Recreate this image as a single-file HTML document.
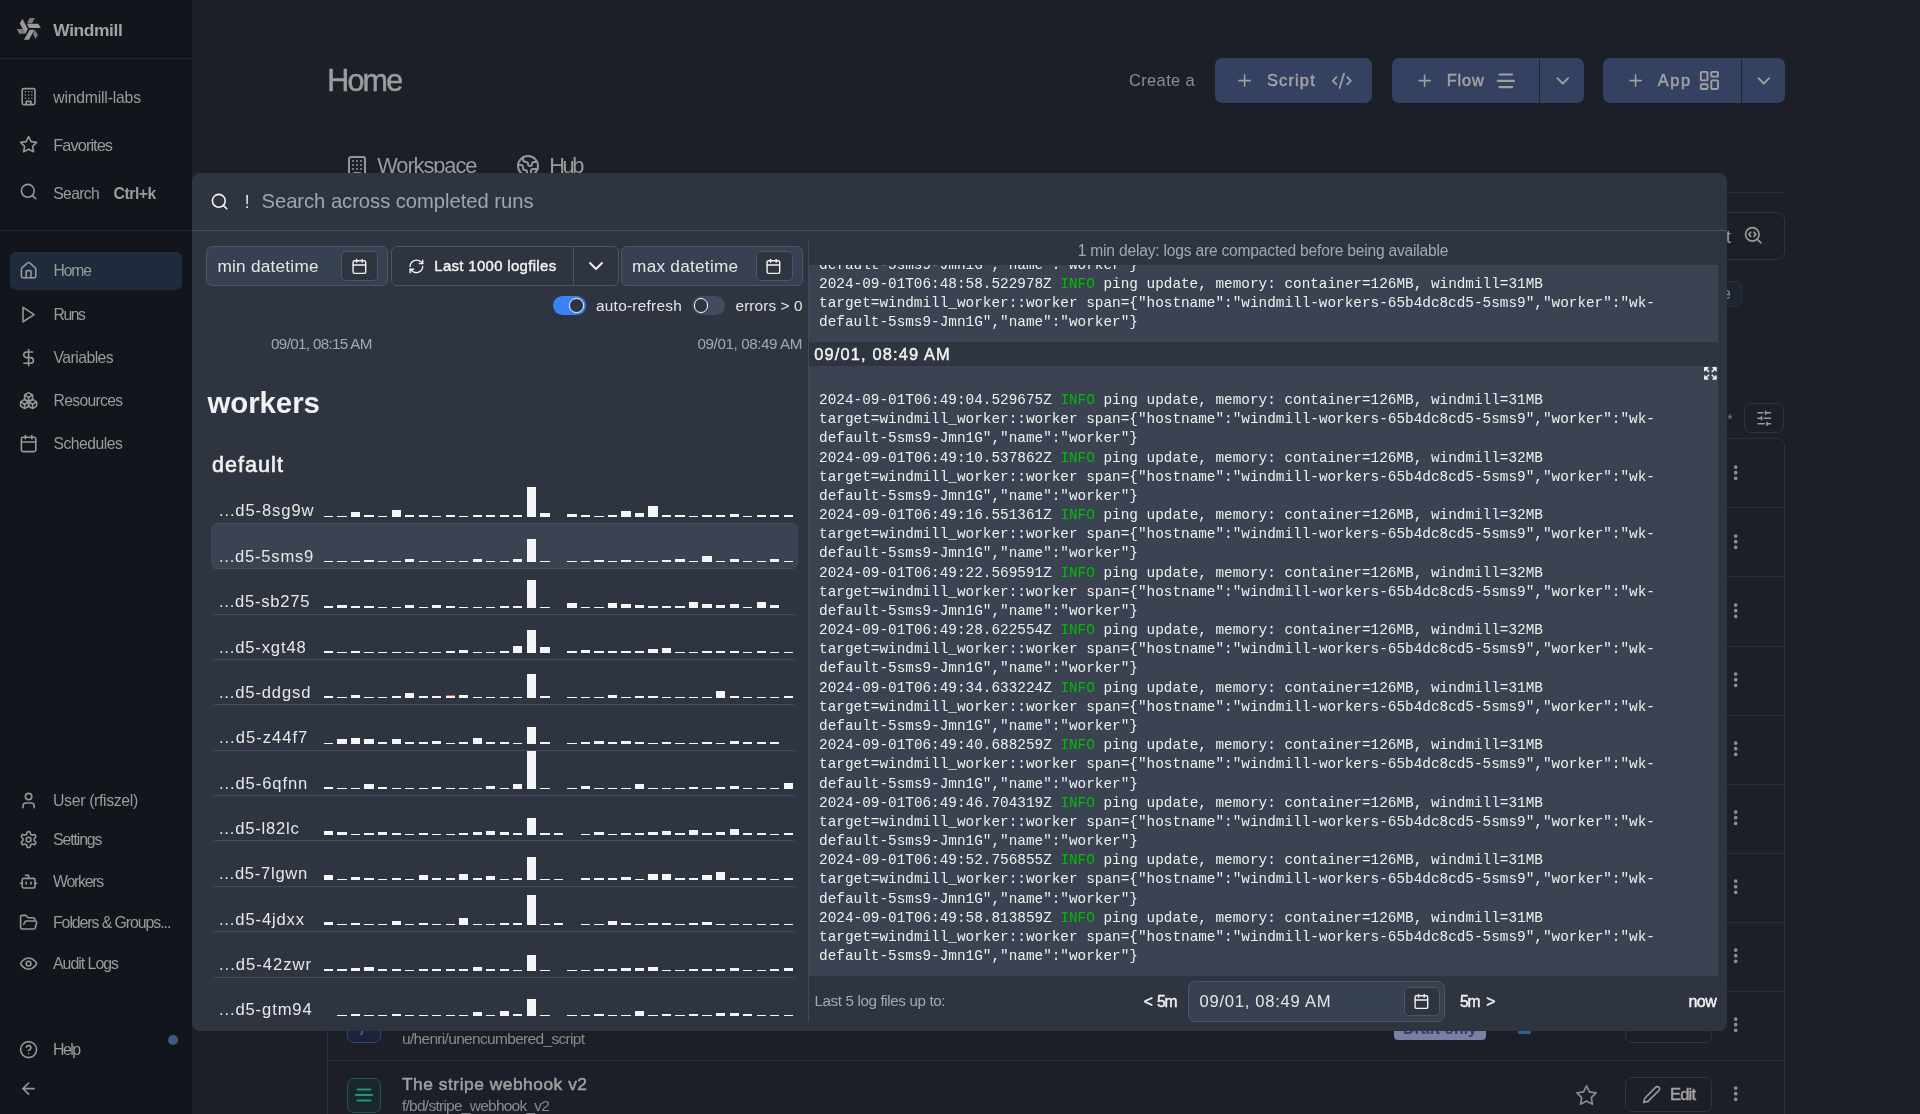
<!DOCTYPE html>
<html><head><meta charset="utf-8"><title>Windmill</title>
<style>
html,body{margin:0;padding:0;width:1920px;height:1114px;overflow:hidden;background:#1c1f27;font-family:'Liberation Sans',sans-serif;}
.r{position:absolute;}
.t{position:absolute;white-space:pre;line-height:1;}
</style></head><body><div id="root" style="position:absolute;left:0;top:0;width:1920px;height:1114px;will-change:transform">
<div class="r" style="left:0px;top:0px;width:192px;height:1114px;background:#12151c;"></div>
<div class="r" style="left:0px;top:58px;width:192px;height:1px;background:#242830;"></div>
<div class="r" style="left:0px;top:230px;width:192px;height:1px;background:#242830;"></div>
<svg class="r" style="left:12px;top:12px" width="34" height="34" viewBox="0 0 1114 1114">
<g fill="#9a9a9a"><polygon points="490,385 860,385 945,525 560,525"/><polygon points="255,380 340,225 520,555 440,720"/><polygon points="390,910 580,580 740,580 555,910"/></g>
<g fill="#7c7c7c"><polygon points="495,365 580,200 750,200 660,365"/><polygon points="160,560 350,560 440,715 230,715"/><polygon points="690,720 750,585 850,750 770,885"/></g></svg>
<div class="t" style="left:53.30px;top:22.21px;font-size:17.4px;color:#a3a3a3;font-weight:700;letter-spacing:-0.400px;">Windmill</div>
<svg class="r" style="left:19.4px;top:87.3px;" width="19.2" height="19.2" viewBox="0 0 24 24" fill="none" stroke="#979797" stroke-width="2" stroke-linecap="round" stroke-linejoin="round"><rect width="16" height="20" x="4" y="2" rx="2" ry="2"/><path d="M9 22v-4h6v4"/><path d="M8 6h.01"/><path d="M16 6h.01"/><path d="M12 6h.01"/><path d="M12 10h.01"/><path d="M12 14h.01"/><path d="M16 10h.01"/><path d="M16 14h.01"/><path d="M8 10h.01"/><path d="M8 14h.01"/></svg>
<div class="t" style="left:53.30px;top:89.66px;font-size:15.7px;color:#9b9b9b;letter-spacing:-0.175px;">windmill-labs</div>
<svg class="r" style="left:18.8px;top:134.6px;" width="19.2" height="19.2" viewBox="0 0 24 24" fill="none" stroke="#979797" stroke-width="2" stroke-linecap="round" stroke-linejoin="round"><polygon points="12 2 15.09 8.26 22 9.27 17 14.14 18.18 21.02 12 17.77 5.82 21.02 7 14.14 2 9.27 8.91 8.26 12 2"/></svg>
<div class="t" style="left:53.30px;top:137.46px;font-size:16.4px;color:#9b9b9b;letter-spacing:-0.963px;">Favorites</div>
<svg class="r" style="left:19.0px;top:182.4px;" width="19.2" height="19.2" viewBox="0 0 24 24" fill="none" stroke="#979797" stroke-width="2" stroke-linecap="round" stroke-linejoin="round"><circle cx="11" cy="11" r="8"/><path d="m21 21-4.3-4.3"/></svg>
<div class="t" style="left:53.30px;top:185.96px;font-size:15.7px;color:#9b9b9b;letter-spacing:-0.644px;">Search</div>
<div class="t" style="left:113.60px;top:185.96px;font-size:15.7px;color:#9b9b9b;font-weight:700;letter-spacing:-0.441px;">Ctrl+k</div>
<div class="r" style="left:10px;top:252px;width:172px;height:37.6px;background:#1f2a3c;border-radius:6px;"></div>
<svg class="r" style="left:19.0px;top:260.59999999999997px;" width="19.2" height="19.2" viewBox="0 0 24 24" fill="none" stroke="#979797" stroke-width="2" stroke-linecap="round" stroke-linejoin="round"><path d="M15 21v-8a1 1 0 0 0-1-1h-4a1 1 0 0 0-1 1v8"/><path d="M3 10a2 2 0 0 1 .709-1.528l7-5.999a2 2 0 0 1 2.582 0l7 5.999A2 2 0 0 1 21 10v9a2 2 0 0 1-2 2H5a2 2 0 0 1-2-2z"/></svg>
<div class="t" style="left:53.50px;top:262.55px;font-size:15.7px;color:#9b9b9b;letter-spacing:-1.120px;">Home</div>
<svg class="r" style="left:19.0px;top:304.7px;" width="19.2" height="19.2" viewBox="0 0 24 24" fill="none" stroke="#979797" stroke-width="2" stroke-linecap="round" stroke-linejoin="round"><polygon points="5 3 19 12 5 21 5 3"/></svg>
<div class="t" style="left:53.50px;top:306.65px;font-size:15.7px;color:#9b9b9b;letter-spacing:-1.442px;">Runs</div>
<svg class="r" style="left:19.0px;top:348.2px;" width="19.2" height="19.2" viewBox="0 0 24 24" fill="none" stroke="#979797" stroke-width="2" stroke-linecap="round" stroke-linejoin="round"><line x1="12" x2="12" y1="2" y2="22"/><path d="M17 5H9.5a3.5 3.5 0 0 0 0 7h5a3.5 3.5 0 0 1 0 7H6"/></svg>
<div class="t" style="left:53.50px;top:350.15px;font-size:15.7px;color:#9b9b9b;letter-spacing:-0.506px;">Variables</div>
<svg class="r" style="left:19.0px;top:391.2px;" width="19.2" height="19.2" viewBox="0 0 24 24" fill="none" stroke="#979797" stroke-width="2" stroke-linecap="round" stroke-linejoin="round"><path d="M2.97 12.92A2 2 0 0 0 2 14.63v3.24a2 2 0 0 0 .97 1.71l3 1.8a2 2 0 0 0 2.06 0L12 19v-5.5l-5-3-4.03 2.42Z"/><path d="m7 16.5-4.74-2.85"/><path d="m7 16.5 5-3"/><path d="M7 16.5v5.17"/><path d="M12 13.5V19l3.97 2.38a2 2 0 0 0 2.06 0l3-1.8a2 2 0 0 0 .97-1.71v-3.24a2 2 0 0 0-.97-1.71L17 10.5l-5 3Z"/><path d="m17 16.5-5-3"/><path d="m17 16.5 4.74-2.85"/><path d="M17 16.5v5.17"/><path d="M7.97 4.42A2 2 0 0 0 7 6.13v4.37l5 3 5-3V6.13a2 2 0 0 0-.97-1.71l-3-1.8a2 2 0 0 0-2.06 0l-3 1.8Z"/><path d="M12 8 7.26 5.15"/><path d="m12 8 4.74-2.85"/><path d="M12 13.5V8"/></svg>
<div class="t" style="left:53.50px;top:393.15px;font-size:15.7px;color:#9b9b9b;letter-spacing:-0.661px;">Resources</div>
<svg class="r" style="left:19.0px;top:433.9px;" width="19.2" height="19.2" viewBox="0 0 24 24" fill="none" stroke="#979797" stroke-width="2" stroke-linecap="round" stroke-linejoin="round"><rect width="18" height="18" x="3" y="4" rx="2" ry="2"/><line x1="16" x2="16" y1="2" y2="6"/><line x1="8" x2="8" y1="2" y2="6"/><line x1="3" x2="21" y1="10" y2="10"/></svg>
<div class="t" style="left:53.50px;top:435.86px;font-size:15.7px;color:#9b9b9b;letter-spacing:-0.496px;">Schedules</div>
<svg class="r" style="left:19.0px;top:790.7px;" width="19.2" height="19.2" viewBox="0 0 24 24" fill="none" stroke="#979797" stroke-width="2" stroke-linecap="round" stroke-linejoin="round"><path d="M19 21v-2a4 4 0 0 0-4-4H9a4 4 0 0 0-4 4v2"/><circle cx="12" cy="7" r="4"/></svg>
<div class="t" style="left:53.00px;top:792.69px;font-size:15.9px;color:#9b9b9b;letter-spacing:-0.365px;">User (rfiszel)</div>
<svg class="r" style="left:19.0px;top:830.2px;" width="19.2" height="19.2" viewBox="0 0 24 24" fill="none" stroke="#979797" stroke-width="2" stroke-linecap="round" stroke-linejoin="round"><path d="M12.22 2h-.44a2 2 0 0 0-2 2v.18a2 2 0 0 1-1 1.73l-.43.25a2 2 0 0 1-2 0l-.15-.08a2 2 0 0 0-2.73.73l-.22.38a2 2 0 0 0 .73 2.73l.15.1a2 2 0 0 1 1 1.72v.51a2 2 0 0 1-1 1.74l-.15.09a2 2 0 0 0-.73 2.73l.22.38a2 2 0 0 0 2.73.73l.15-.08a2 2 0 0 1 2 0l.43.25a2 2 0 0 1 1 1.73V20a2 2 0 0 0 2 2h.44a2 2 0 0 0 2-2v-.18a2 2 0 0 1 1-1.73l.43-.25a2 2 0 0 1 2 0l.15.08a2 2 0 0 0 2.73-.73l.22-.39a2 2 0 0 0-.73-2.73l-.15-.08a2 2 0 0 1-1-1.74v-.5a2 2 0 0 1 1-1.74l.15-.09a2 2 0 0 0 .73-2.73l-.22-.38a2 2 0 0 0-2.73-.73l-.15.08a2 2 0 0 1-2 0l-.43-.25a2 2 0 0 1-1-1.73V4a2 2 0 0 0-2-2z"/><circle cx="12" cy="12" r="3"/></svg>
<div class="t" style="left:53.00px;top:832.19px;font-size:15.9px;color:#9b9b9b;letter-spacing:-1.132px;">Settings</div>
<svg class="r" style="left:19.0px;top:871.6px;" width="19.2" height="19.2" viewBox="0 0 24 24" fill="none" stroke="#979797" stroke-width="2" stroke-linecap="round" stroke-linejoin="round"><path d="M12 8V4H8"/><rect width="16" height="12" x="4" y="8" rx="2"/><path d="M2 14h2"/><path d="M20 14h2"/><path d="M15 13v2"/><path d="M9 13v2"/></svg>
<div class="t" style="left:53.00px;top:873.59px;font-size:15.9px;color:#9b9b9b;letter-spacing:-1.263px;">Workers</div>
<svg class="r" style="left:19.0px;top:912.7px;" width="19.2" height="19.2" viewBox="0 0 24 24" fill="none" stroke="#979797" stroke-width="2" stroke-linecap="round" stroke-linejoin="round"><path d="m6 14 1.5-2.9A2 2 0 0 1 9.24 10H20a2 2 0 0 1 1.94 2.5l-1.54 6a2 2 0 0 1-1.95 1.5H4a2 2 0 0 1-2-2V5a2 2 0 0 1 2-2h3.9a2 2 0 0 1 1.69.9l.81 1.2a2 2 0 0 0 1.67.9H18a2 2 0 0 1 2 2v2"/></svg>
<div class="t" style="left:53.00px;top:914.69px;font-size:15.9px;color:#9b9b9b;letter-spacing:-1.082px;">Folders &amp; Groups...</div>
<svg class="r" style="left:19.0px;top:953.7px;" width="19.2" height="19.2" viewBox="0 0 24 24" fill="none" stroke="#979797" stroke-width="2" stroke-linecap="round" stroke-linejoin="round"><path d="M2 12s3-7 10-7 10 7 10 7-3 7-10 7-10-7-10-7Z"/><circle cx="12" cy="12" r="3"/></svg>
<div class="t" style="left:53.00px;top:955.69px;font-size:15.9px;color:#9b9b9b;letter-spacing:-1.010px;">Audit Logs</div>
<svg class="r" style="left:19.0px;top:1039.8px;" width="19.2" height="19.2" viewBox="0 0 24 24" fill="none" stroke="#979797" stroke-width="2" stroke-linecap="round" stroke-linejoin="round"><circle cx="12" cy="12" r="10"/><path d="M9.09 9a3 3 0 0 1 5.83 1c0 2-3 3-3 3"/><path d="M12 17h.01"/></svg>
<div class="t" style="left:53.00px;top:1042.08px;font-size:15.9px;color:#9b9b9b;letter-spacing:-1.496px;">Help</div>
<div class="r" style="left:168.2px;top:1035.4px;width:10px;height:10px;background:#3d5a80;border-radius:5px;"></div>
<svg class="r" style="left:18.6px;top:1079px;" width="19.2" height="19.2" viewBox="0 0 24 24" fill="none" stroke="#979797" stroke-width="2" stroke-linecap="round" stroke-linejoin="round"><path d="m12 19-7-7 7-7"/><path d="M19 12H5"/></svg>
<div class="t" style="left:327.20px;top:64.98px;font-size:30.5px;color:#9c9c9c;letter-spacing:-1.786px;-webkit-text-stroke:0.5px #9c9c9c;">Home</div>
<div class="t" style="left:1129.00px;top:71.76px;font-size:16.4px;color:#8d8d8d;letter-spacing:0.404px;">Create a</div>
<div class="r" style="left:1215px;top:58px;width:157px;height:45px;background:#344160;border-radius:7px;"></div>
<svg class="r" style="left:1234.8px;top:70.8px;" width="19.2" height="19.2" viewBox="0 0 24 24" fill="none" stroke="#a0a0a0" stroke-width="2" stroke-linecap="round" stroke-linejoin="round"><path d="M5 12h14"/><path d="M12 5v14"/></svg>
<div class="t" style="left:1267.00px;top:72.26px;font-size:16.4px;color:#a3a3a3;-webkit-text-stroke:0.46px #a3a3a3;letter-spacing:1.159px;">Script</div>
<svg class="r" style="left:1331.0px;top:69.8px;" width="21.6" height="21.6" viewBox="0 0 24 24" fill="none" stroke="#a0a0a0" stroke-width="2" stroke-linecap="round" stroke-linejoin="round"><path d="m18 16 4-4-4-4"/><path d="m6 8-4 4 4 4"/><path d="m14.5 4-5 16"/></svg>
<div class="r" style="left:1392px;top:58px;width:192px;height:45px;background:#344160;border-radius:7px;"></div>
<div class="r" style="left:1539px;top:58px;width:1.2px;height:45px;background:#1f2533;"></div>
<svg class="r" style="left:1414.8px;top:70.8px;" width="19.2" height="19.2" viewBox="0 0 24 24" fill="none" stroke="#a0a0a0" stroke-width="2" stroke-linecap="round" stroke-linejoin="round"><path d="M5 12h14"/><path d="M12 5v14"/></svg>
<div class="t" style="left:1446.70px;top:72.26px;font-size:16.4px;color:#a3a3a3;-webkit-text-stroke:0.46px #a3a3a3;letter-spacing:0.864px;">Flow</div>
<svg class="r" style="left:1494.6px;top:70.2px;" width="21.6" height="21.6" viewBox="0 0 24 24" fill="none" stroke="#a0a0a0" stroke-width="2.4" stroke-linecap="round" stroke-linejoin="round"><path d="M5 5h14"/><path d="M3 12h18"/><path d="M5 19h14"/></svg>
<svg class="r" style="left:1552.0px;top:70.4px;" width="21.6" height="21.6" viewBox="0 0 24 24" fill="none" stroke="#a0a0a0" stroke-width="2" stroke-linecap="round" stroke-linejoin="round"><path d="m6 9 6 6 6-6"/></svg>
<div class="r" style="left:1603px;top:58px;width:182px;height:45px;background:#344160;border-radius:7px;"></div>
<div class="r" style="left:1740.5px;top:58px;width:1.2px;height:45px;background:#1f2533;"></div>
<svg class="r" style="left:1626.2px;top:70.8px;" width="19.2" height="19.2" viewBox="0 0 24 24" fill="none" stroke="#a0a0a0" stroke-width="2" stroke-linecap="round" stroke-linejoin="round"><path d="M5 12h14"/><path d="M12 5v14"/></svg>
<div class="t" style="left:1657.80px;top:72.26px;font-size:16.4px;color:#a3a3a3;-webkit-text-stroke:0.46px #a3a3a3;letter-spacing:1.614px;">App</div>
<svg class="r" style="left:1697.6px;top:69.4px;" width="22.8" height="22.8" viewBox="0 0 24 24" fill="none" stroke="#a0a0a0" stroke-width="2" stroke-linecap="round" stroke-linejoin="round"><rect width="7" height="9" x="3" y="3" rx="1"/><rect width="7" height="5" x="14" y="3" rx="1"/><rect width="7" height="9" x="14" y="12" rx="1"/><rect width="7" height="5" x="3" y="16" rx="1"/></svg>
<svg class="r" style="left:1753.0px;top:70.4px;" width="21.6" height="21.6" viewBox="0 0 24 24" fill="none" stroke="#a0a0a0" stroke-width="2" stroke-linecap="round" stroke-linejoin="round"><path d="m6 9 6 6 6-6"/></svg>
<svg class="r" style="left:345.0px;top:154.5px;" width="24" height="24" viewBox="0 0 24 24" fill="none" stroke="#959595" stroke-width="2" stroke-linecap="round" stroke-linejoin="round"><rect width="16" height="20" x="4" y="2" rx="2" ry="2"/><path d="M9 22v-4h6v4"/><path d="M8 6h.01"/><path d="M16 6h.01"/><path d="M12 6h.01"/><path d="M12 10h.01"/><path d="M12 14h.01"/><path d="M16 10h.01"/><path d="M16 14h.01"/><path d="M8 10h.01"/><path d="M8 14h.01"/></svg>
<div class="t" style="left:377.20px;top:155.07px;font-size:21.8px;color:#9a9a9a;letter-spacing:-1.053px;">Workspace</div>
<svg class="r" style="left:515.8px;top:153.6px;" width="24" height="24" viewBox="0 0 24 24" fill="none" stroke="#959595" stroke-width="2" stroke-linecap="round" stroke-linejoin="round"><path d="M21.54 15H17a2 2 0 0 0-2 2v4.54"/><path d="M7 3.34V5a3 3 0 0 0 3 3a2 2 0 0 1 2 2c0 1.1.9 2 2 2a2 2 0 0 0 2-2c0-1.1.9-2 2-2h3.17"/><path d="M11 21.95V18a2 2 0 0 0-2-2a2 2 0 0 1-2-2v-1a2 2 0 0 0-2-2H2.05"/><circle cx="12" cy="12" r="10"/></svg>
<div class="t" style="left:549.20px;top:155.07px;font-size:21.8px;color:#9a9a9a;letter-spacing:-2.400px;">Hub</div>
<div class="r" style="left:327px;top:192px;width:1458px;height:1px;background:#2a2f39;"></div>
<div class="r" style="left:1500px;top:212.3px;width:285px;height:48.2px;border:1px solid #2d333e;box-sizing:border-box;border-radius:8px;"></div>
<div class="t" style="left:1731.00px;top:227.18px;font-size:19.2px;color:#9a9a9a;transform:translateX(-100%);">t</div>
<svg class="r" style="left:1742.8px;top:225.4px;" width="20.4" height="20.4" viewBox="0 0 24 24" fill="none" stroke="#9a9a9a" stroke-width="2" stroke-linecap="round" stroke-linejoin="round"><path d="m13 13.5 2-2.5-2-2.5"/><path d="m21 21-4.3-4.3"/><path d="M9 8.5 7 11l2 2.5"/><circle cx="11" cy="11" r="8"/></svg>
<div class="r" style="left:1600px;top:281px;width:142px;height:26px;background:#1e2531;border:1px solid #2a313d;box-sizing:border-box;border-radius:6px;"></div>
<div class="t" style="left:1731.00px;top:285.90px;font-size:16px;color:#8a8f98;transform:translateX(-100%);">e</div>
<div class="t" style="left:1727.20px;top:412.10px;font-size:14px;color:#7e7e7e;">*</div>
<div class="r" style="left:1744.4px;top:403.4px;width:40px;height:30px;border:1px solid #2d333e;box-sizing:border-box;border-radius:7px;"></div>
<svg class="r" style="left:1756.3px;top:410.2px;" width="16.6" height="16.6" viewBox="0 0 24 24" fill="none" stroke="#9a9a9a" stroke-width="2.3" stroke-linecap="round" stroke-linejoin="round"><line x1="21" x2="14" y1="4" y2="4"/><line x1="10" x2="3" y1="4" y2="4"/><line x1="21" x2="12" y1="12" y2="12"/><line x1="8" x2="3" y1="12" y2="12"/><line x1="21" x2="16" y1="20" y2="20"/><line x1="12" x2="3" y1="20" y2="20"/><line x1="14" x2="14" y1="2" y2="6"/><line x1="8" x2="8" y1="10" y2="14"/><line x1="16" x2="16" y1="18" y2="22"/></svg>
<div class="r" style="left:327px;top:437.6px;width:1458px;height:700px;border:1px solid #2a2f3a;box-sizing:border-box;border-radius:8px;"></div>
<div class="r" style="left:327px;top:507.4px;width:1458px;height:1px;background:#2a2f3a;"></div>
<div class="r" style="left:327px;top:576.48px;width:1458px;height:1px;background:#2a2f3a;"></div>
<div class="r" style="left:327px;top:645.56px;width:1458px;height:1px;background:#2a2f3a;"></div>
<div class="r" style="left:327px;top:714.64px;width:1458px;height:1px;background:#2a2f3a;"></div>
<div class="r" style="left:327px;top:783.72px;width:1458px;height:1px;background:#2a2f3a;"></div>
<div class="r" style="left:327px;top:852.8px;width:1458px;height:1px;background:#2a2f3a;"></div>
<div class="r" style="left:327px;top:921.88px;width:1458px;height:1px;background:#2a2f3a;"></div>
<div class="r" style="left:327px;top:990.96px;width:1458px;height:1px;background:#2a2f3a;"></div>
<div class="r" style="left:327px;top:1060.04px;width:1458px;height:1px;background:#2a2f3a;"></div>
<svg class="r" style="left:1725.9px;top:462.7px;" width="19.4" height="19.4" viewBox="0 0 24 24" fill="none" stroke="#8f8f8f" stroke-width="2.6" stroke-linecap="round" stroke-linejoin="round"><g fill="#8f8f8f"><circle cx="12" cy="12" r="1"/><circle cx="12" cy="5" r="1"/><circle cx="12" cy="19" r="1"/></g></svg>
<svg class="r" style="left:1725.9px;top:531.78px;" width="19.4" height="19.4" viewBox="0 0 24 24" fill="none" stroke="#8f8f8f" stroke-width="2.6" stroke-linecap="round" stroke-linejoin="round"><g fill="#8f8f8f"><circle cx="12" cy="12" r="1"/><circle cx="12" cy="5" r="1"/><circle cx="12" cy="19" r="1"/></g></svg>
<svg class="r" style="left:1725.9px;top:600.86px;" width="19.4" height="19.4" viewBox="0 0 24 24" fill="none" stroke="#8f8f8f" stroke-width="2.6" stroke-linecap="round" stroke-linejoin="round"><g fill="#8f8f8f"><circle cx="12" cy="12" r="1"/><circle cx="12" cy="5" r="1"/><circle cx="12" cy="19" r="1"/></g></svg>
<svg class="r" style="left:1725.9px;top:669.94px;" width="19.4" height="19.4" viewBox="0 0 24 24" fill="none" stroke="#8f8f8f" stroke-width="2.6" stroke-linecap="round" stroke-linejoin="round"><g fill="#8f8f8f"><circle cx="12" cy="12" r="1"/><circle cx="12" cy="5" r="1"/><circle cx="12" cy="19" r="1"/></g></svg>
<svg class="r" style="left:1725.9px;top:739.02px;" width="19.4" height="19.4" viewBox="0 0 24 24" fill="none" stroke="#8f8f8f" stroke-width="2.6" stroke-linecap="round" stroke-linejoin="round"><g fill="#8f8f8f"><circle cx="12" cy="12" r="1"/><circle cx="12" cy="5" r="1"/><circle cx="12" cy="19" r="1"/></g></svg>
<svg class="r" style="left:1725.9px;top:808.0999999999999px;" width="19.4" height="19.4" viewBox="0 0 24 24" fill="none" stroke="#8f8f8f" stroke-width="2.6" stroke-linecap="round" stroke-linejoin="round"><g fill="#8f8f8f"><circle cx="12" cy="12" r="1"/><circle cx="12" cy="5" r="1"/><circle cx="12" cy="19" r="1"/></g></svg>
<svg class="r" style="left:1725.9px;top:877.1800000000001px;" width="19.4" height="19.4" viewBox="0 0 24 24" fill="none" stroke="#8f8f8f" stroke-width="2.6" stroke-linecap="round" stroke-linejoin="round"><g fill="#8f8f8f"><circle cx="12" cy="12" r="1"/><circle cx="12" cy="5" r="1"/><circle cx="12" cy="19" r="1"/></g></svg>
<svg class="r" style="left:1725.9px;top:946.26px;" width="19.4" height="19.4" viewBox="0 0 24 24" fill="none" stroke="#8f8f8f" stroke-width="2.6" stroke-linecap="round" stroke-linejoin="round"><g fill="#8f8f8f"><circle cx="12" cy="12" r="1"/><circle cx="12" cy="5" r="1"/><circle cx="12" cy="19" r="1"/></g></svg>
<svg class="r" style="left:1725.9px;top:1015.3399999999999px;" width="19.4" height="19.4" viewBox="0 0 24 24" fill="none" stroke="#8f8f8f" stroke-width="2.6" stroke-linecap="round" stroke-linejoin="round"><g fill="#8f8f8f"><circle cx="12" cy="12" r="1"/><circle cx="12" cy="5" r="1"/><circle cx="12" cy="19" r="1"/></g></svg>
<svg class="r" style="left:1725.9px;top:1084.42px;" width="19.4" height="19.4" viewBox="0 0 24 24" fill="none" stroke="#8f8f8f" stroke-width="2.6" stroke-linecap="round" stroke-linejoin="round"><g fill="#8f8f8f"><circle cx="12" cy="12" r="1"/><circle cx="12" cy="5" r="1"/><circle cx="12" cy="19" r="1"/></g></svg>
<div class="r" style="left:347px;top:1008.5px;width:34px;height:34px;background:#1b2338;border:1.3px solid #2f4a78;box-sizing:border-box;border-radius:7px;"></div>
<div class="r" style="left:360.5px;top:1029px;width:2.2px;height:6px;background:#3563b0;transform:skewX(-18deg);"></div>
<div class="t" style="left:402.00px;top:1031.33px;font-size:15.5px;color:#8a8a8a;letter-spacing:-0.683px;">u/henri/unencumbered_script</div>
<div class="r" style="left:1394px;top:1012px;width:92px;height:28px;background:#7b7fa3;border-radius:4px;"></div>
<div class="t" style="left:1403.00px;top:1021.40px;font-size:16px;color:#3a3a6e;font-weight:700;letter-spacing:-0.075px;">Draft only</div>
<div class="r" style="left:1518px;top:1029px;width:13px;height:5px;background:#2f5d94;border-radius:1px;"></div>
<div class="r" style="left:1625.4px;top:1008px;width:86.2px;height:35.3px;border:1px solid #30353f;box-sizing:border-box;border-radius:7px;"></div>
<div class="r" style="left:347px;top:1077.5px;width:34px;height:35px;background:#1a2629;border:1.3px solid #1d5c4a;box-sizing:border-box;border-radius:7px;"></div>
<svg class="r" style="left:353px;top:1084px" width="22" height="22" viewBox="0 0 24 24" fill="none" stroke="#1f9481" stroke-width="2.3" stroke-linecap="round"><path d="M5 6h14"/><path d="M3 12h18"/><path d="M5 18h14"/></svg>
<div class="t" style="left:402.00px;top:1075.81px;font-size:17.4px;color:#a0a0a0;-webkit-text-stroke:0.49px #a0a0a0;letter-spacing:0.502px;">The stripe webhook v2</div>
<div class="t" style="left:402.00px;top:1097.73px;font-size:15.5px;color:#8a8a8a;letter-spacing:-0.749px;">f/bd/stripe_webhook_v2</div>
<svg class="r" style="left:1574.6px;top:1083.5px;" width="23" height="23" viewBox="0 0 24 24" fill="none" stroke="#8a8a8a" stroke-width="1.8" stroke-linecap="round" stroke-linejoin="round"><polygon points="12 2 15.09 8.26 22 9.27 17 14.14 18.18 21.02 12 17.77 5.82 21.02 7 14.14 2 9.27 8.91 8.26 12 2"/></svg>
<div class="r" style="left:1625.4px;top:1077px;width:86.2px;height:35.3px;border:1px solid #30353f;box-sizing:border-box;border-radius:7px;"></div>
<svg class="r" style="left:1641.5px;top:1085.4px;" width="19.2" height="19.2" viewBox="0 0 24 24" fill="none" stroke="#9a9a9a" stroke-width="2" stroke-linecap="round" stroke-linejoin="round"><path d="M17 3a2.85 2.83 0 1 1 4 4L7.5 20.5 2 22l1.5-5.5Z"/></svg>
<div class="t" style="left:1670.00px;top:1086.69px;font-size:16.6px;color:#a3a3a3;-webkit-text-stroke:0.46px #a3a3a3;letter-spacing:-0.865px;">Edit</div>
<div class="r" style="left:192px;top:173px;width:1535px;height:858px;background:#2e3440;border-radius:8px;"></div>
<div class="r" style="left:192px;top:230px;width:1535px;height:1px;background:#46505f;"></div>
<svg class="r" style="left:209.6px;top:191.8px;" width="19.2" height="19.2" viewBox="0 0 24 24" fill="none" stroke="#f2f2f2" stroke-width="2" stroke-linecap="round" stroke-linejoin="round"><circle cx="11" cy="11" r="8"/><path d="m21 21-4.3-4.3"/></svg>
<div class="t" style="left:244.50px;top:191.88px;font-size:19.2px;color:#dddddd;letter-spacing:-1.844px;">!</div>
<div class="t" style="left:261.50px;top:191.43px;font-size:20.2px;color:#a0a6b1;letter-spacing:-0.025px;">Search across completed runs</div>
<div class="r" style="left:206px;top:246px;width:181.5px;height:39.7px;background:#374151;border:1px solid #4b5563;box-sizing:border-box;border-radius:6px;"></div>
<div class="r" style="left:341.4px;top:251.2px;width:37px;height:29.4px;background:#2e3440;border:1px solid #4b5563;box-sizing:border-box;border-radius:5px;"></div>
<svg class="r" style="left:350.9px;top:257.9px;" width="16.8" height="16.8" viewBox="0 0 24 24" fill="none" stroke="#f2f2f2" stroke-width="2" stroke-linecap="round" stroke-linejoin="round"><rect width="18" height="18" x="3" y="4" rx="2" ry="2"/><line x1="16" x2="16" y1="2" y2="6"/><line x1="8" x2="8" y1="2" y2="6"/><line x1="3" x2="21" y1="10" y2="10"/></svg>
<div class="t" style="left:217.50px;top:257.68px;font-size:17.2px;color:#e6e6e6;letter-spacing:0.236px;">min datetime</div>
<div class="r" style="left:391px;top:246px;width:227.7px;height:39.7px;border:1px solid #4b5563;box-sizing:border-box;border-radius:6px;"></div>
<div class="r" style="left:573px;top:246px;width:1px;height:39.7px;background:#4b5563;"></div>
<svg class="r" style="left:407.6px;top:257.6px;" width="16.8" height="16.8" viewBox="0 0 24 24" fill="none" stroke="#f2f2f2" stroke-width="2" stroke-linecap="round" stroke-linejoin="round"><path d="M3 12a9 9 0 0 1 9-9 9.75 9.75 0 0 1 6.74 2.74L21 8"/><path d="M21 3v5h-5"/><path d="M21 12a9 9 0 0 1-9 9 9.75 9.75 0 0 1-6.74-2.74L3 16"/><path d="M8 16H3v5"/></svg>
<div class="t" style="left:434.30px;top:259.33px;font-size:14.9px;color:#f2f2f2;-webkit-text-stroke:0.42px #f2f2f2;letter-spacing:0.347px;">Last 1000 logfiles</div>
<svg class="r" style="left:583.8px;top:253.8px;" width="24" height="24" viewBox="0 0 24 24" fill="none" stroke="#f2f2f2" stroke-width="2" stroke-linecap="round" stroke-linejoin="round"><path d="m6 9 6 6 6-6"/></svg>
<div class="r" style="left:621px;top:246px;width:182px;height:39.7px;background:#374151;border:1px solid #4b5563;box-sizing:border-box;border-radius:6px;"></div>
<div class="r" style="left:755.7px;top:251.2px;width:37px;height:29.4px;background:#2e3440;border:1px solid #4b5563;box-sizing:border-box;border-radius:5px;"></div>
<svg class="r" style="left:765.2px;top:257.9px;" width="16.8" height="16.8" viewBox="0 0 24 24" fill="none" stroke="#f2f2f2" stroke-width="2" stroke-linecap="round" stroke-linejoin="round"><rect width="18" height="18" x="3" y="4" rx="2" ry="2"/><line x1="16" x2="16" y1="2" y2="6"/><line x1="8" x2="8" y1="2" y2="6"/><line x1="3" x2="21" y1="10" y2="10"/></svg>
<div class="t" style="left:632.10px;top:257.68px;font-size:17.2px;color:#e6e6e6;letter-spacing:0.257px;">max datetime</div>
<div class="r" style="left:553px;top:296px;width:33px;height:18.8px;background:#3b82f6;border-radius:9.4px;"></div>
<div class="r" style="left:569.2px;top:298.3px;width:14.6px;height:14.6px;background:#2e3440;border:1.5px solid #ffffff;box-sizing:border-box;border-radius:7.3px;"></div>
<div class="t" style="left:596.00px;top:297.51px;font-size:15.4px;color:#e6e6e6;letter-spacing:0.247px;">auto-refresh</div>
<div class="r" style="left:692px;top:296px;width:33px;height:18.8px;background:#434c5e;border-radius:9.4px;"></div>
<div class="r" style="left:693.9px;top:298.3px;width:14.6px;height:14.6px;background:#2e3440;border:1.5px solid #ffffff;box-sizing:border-box;border-radius:7.3px;"></div>
<div class="t" style="left:735.50px;top:297.51px;font-size:15.4px;color:#e6e6e6;letter-spacing:0.078px;">errors &gt; 0</div>
<div class="t" style="left:271.10px;top:335.98px;font-size:15.2px;color:#a3a9b4;letter-spacing:-0.666px;">09/01, 08:15 AM</div>
<div class="t" style="left:697.50px;top:335.98px;font-size:15.2px;color:#a3a9b4;letter-spacing:-0.402px;">09/01, 08:49 AM</div>
<div class="t" style="left:207.40px;top:387.91px;font-size:29.4px;color:#f2f2f2;font-weight:700;letter-spacing:-0.039px;">workers</div>
<div class="t" style="left:211.90px;top:453.84px;font-size:21.6px;color:#f2f2f2;-webkit-text-stroke:0.60px #f2f2f2;letter-spacing:1.026px;">default</div>
<div class="t" style="left:218.90px;top:503.49px;font-size:16.6px;color:#e8e8e8;letter-spacing:0.882px;">...d5-8sg9w</div>
<div class="r" style="left:211.0px;top:522.9px;width:586.8px;height:45.4px;background:#3b4252;border-top:1px solid #444e60;border-radius:6px;"></div>
<div class="t" style="left:218.90px;top:548.85px;font-size:16.6px;color:#e8e8e8;letter-spacing:0.770px;">...d5-5sms9</div>
<div class="r" style="left:211.0px;top:568.26px;width:586.8px;height:45.4px;background:transparent;border-top:1px solid #444e60;border-radius:6px;"></div>
<div class="t" style="left:218.90px;top:594.21px;font-size:16.6px;color:#e8e8e8;letter-spacing:0.757px;">...d5-sb275</div>
<div class="r" style="left:211.0px;top:613.62px;width:586.8px;height:45.4px;background:transparent;border-top:1px solid #444e60;border-radius:6px;"></div>
<div class="t" style="left:218.90px;top:639.57px;font-size:16.6px;color:#e8e8e8;letter-spacing:0.838px;">...d5-xgt48</div>
<div class="r" style="left:211.0px;top:658.98px;width:586.8px;height:45.4px;background:transparent;border-top:1px solid #444e60;border-radius:6px;"></div>
<div class="t" style="left:218.90px;top:684.93px;font-size:16.6px;color:#e8e8e8;letter-spacing:0.847px;">...d5-ddgsd</div>
<div class="r" style="left:211.0px;top:704.3399999999999px;width:586.8px;height:45.4px;background:transparent;border-top:1px solid #444e60;border-radius:6px;"></div>
<div class="t" style="left:218.90px;top:730.29px;font-size:16.6px;color:#e8e8e8;letter-spacing:0.998px;">...d5-z44f7</div>
<div class="r" style="left:211.0px;top:749.7px;width:586.8px;height:45.4px;background:transparent;border-top:1px solid #444e60;border-radius:6px;"></div>
<div class="t" style="left:218.90px;top:775.65px;font-size:16.6px;color:#e8e8e8;letter-spacing:0.906px;">...d5-6qfnn</div>
<div class="r" style="left:211.0px;top:795.06px;width:586.8px;height:45.4px;background:transparent;border-top:1px solid #444e60;border-radius:6px;"></div>
<div class="t" style="left:218.90px;top:821.01px;font-size:16.6px;color:#e8e8e8;letter-spacing:0.805px;">...d5-l82lc</div>
<div class="r" style="left:211.0px;top:840.42px;width:586.8px;height:45.4px;background:transparent;border-top:1px solid #444e60;border-radius:6px;"></div>
<div class="t" style="left:218.90px;top:866.37px;font-size:16.6px;color:#e8e8e8;letter-spacing:0.723px;">...d5-7lgwn</div>
<div class="r" style="left:211.0px;top:885.78px;width:586.8px;height:45.4px;background:transparent;border-top:1px solid #444e60;border-radius:6px;"></div>
<div class="t" style="left:218.90px;top:911.73px;font-size:16.6px;color:#e8e8e8;letter-spacing:0.864px;">...d5-4jdxx</div>
<div class="r" style="left:211.0px;top:931.14px;width:586.8px;height:45.4px;background:transparent;border-top:1px solid #444e60;border-radius:6px;"></div>
<div class="t" style="left:218.90px;top:957.09px;font-size:16.6px;color:#e8e8e8;letter-spacing:1.012px;">...d5-42zwr</div>
<div class="r" style="left:211.0px;top:976.5px;width:586.8px;height:45.4px;background:transparent;border-top:1px solid #444e60;border-radius:6px;"></div>
<div class="t" style="left:218.90px;top:1002.45px;font-size:16.6px;color:#e8e8e8;letter-spacing:0.886px;">...d5-gtm94</div>
<svg class="r" style="left:0;top:0" width="1920" height="1114" shape-rendering="crispEdges"><rect x="323.90" y="515.70" width="9.3" height="1.30" fill="#f4f5f7"/><rect x="337.42" y="515.70" width="9.3" height="1.30" fill="#f4f5f7"/><rect x="350.94" y="512.00" width="9.3" height="5.00" fill="#f4f5f7"/><rect x="364.46" y="514.70" width="9.3" height="2.30" fill="#f4f5f7"/><rect x="377.98" y="515.70" width="9.3" height="1.30" fill="#f4f5f7"/><rect x="391.50" y="510.00" width="9.3" height="7.00" fill="#f4f5f7"/><rect x="405.02" y="514.70" width="9.3" height="2.30" fill="#f4f5f7"/><rect x="418.54" y="514.70" width="9.3" height="2.30" fill="#f4f5f7"/><rect x="432.06" y="515.70" width="9.3" height="1.30" fill="#f4f5f7"/><rect x="445.58" y="514.70" width="9.3" height="2.30" fill="#f4f5f7"/><rect x="459.10" y="515.70" width="9.3" height="1.30" fill="#f4f5f7"/><rect x="472.62" y="514.70" width="9.3" height="2.30" fill="#f4f5f7"/><rect x="486.14" y="514.70" width="9.3" height="2.30" fill="#f4f5f7"/><rect x="499.66" y="514.70" width="9.3" height="2.30" fill="#f4f5f7"/><rect x="513.18" y="514.70" width="9.3" height="2.30" fill="#f4f5f7"/><rect x="526.70" y="487.00" width="9.3" height="30.00" fill="#f4f5f7"/><rect x="540.22" y="513.00" width="9.3" height="4.00" fill="#f4f5f7"/><rect x="567.26" y="514.00" width="9.3" height="3.00" fill="#f4f5f7"/><rect x="580.78" y="514.70" width="9.3" height="2.30" fill="#f4f5f7"/><rect x="594.30" y="515.70" width="9.3" height="1.30" fill="#f4f5f7"/><rect x="607.82" y="514.70" width="9.3" height="2.30" fill="#f4f5f7"/><rect x="621.34" y="511.00" width="9.3" height="6.00" fill="#f4f5f7"/><rect x="634.86" y="513.00" width="9.3" height="4.00" fill="#f4f5f7"/><rect x="648.38" y="506.00" width="9.3" height="11.00" fill="#f4f5f7"/><rect x="661.90" y="514.70" width="9.3" height="2.30" fill="#f4f5f7"/><rect x="675.42" y="514.70" width="9.3" height="2.30" fill="#f4f5f7"/><rect x="688.94" y="515.70" width="9.3" height="1.30" fill="#f4f5f7"/><rect x="702.46" y="514.70" width="9.3" height="2.30" fill="#f4f5f7"/><rect x="715.98" y="514.70" width="9.3" height="2.30" fill="#f4f5f7"/><rect x="729.50" y="514.00" width="9.3" height="3.00" fill="#f4f5f7"/><rect x="743.02" y="515.70" width="9.3" height="1.30" fill="#f4f5f7"/><rect x="756.54" y="514.70" width="9.3" height="2.30" fill="#f4f5f7"/><rect x="770.06" y="514.70" width="9.3" height="2.30" fill="#f4f5f7"/><rect x="783.58" y="514.70" width="9.3" height="2.30" fill="#f4f5f7"/><rect x="323.90" y="560.70" width="9.3" height="1.30" fill="#f4f5f7"/><rect x="337.42" y="560.70" width="9.3" height="1.30" fill="#f4f5f7"/><rect x="350.94" y="560.70" width="9.3" height="1.30" fill="#f4f5f7"/><rect x="364.46" y="559.70" width="9.3" height="2.30" fill="#f4f5f7"/><rect x="377.98" y="560.70" width="9.3" height="1.30" fill="#f4f5f7"/><rect x="391.50" y="560.70" width="9.3" height="1.30" fill="#f4f5f7"/><rect x="405.02" y="559.00" width="9.3" height="3.00" fill="#f4f5f7"/><rect x="418.54" y="560.70" width="9.3" height="1.30" fill="#f4f5f7"/><rect x="432.06" y="560.70" width="9.3" height="1.30" fill="#f4f5f7"/><rect x="445.58" y="560.70" width="9.3" height="1.30" fill="#f4f5f7"/><rect x="459.10" y="560.70" width="9.3" height="1.30" fill="#f4f5f7"/><rect x="472.62" y="559.00" width="9.3" height="3.00" fill="#f4f5f7"/><rect x="486.14" y="560.70" width="9.3" height="1.30" fill="#f4f5f7"/><rect x="499.66" y="560.70" width="9.3" height="1.30" fill="#f4f5f7"/><rect x="513.18" y="559.00" width="9.3" height="3.00" fill="#f4f5f7"/><rect x="526.70" y="539.00" width="9.3" height="23.00" fill="#f4f5f7"/><rect x="540.22" y="560.70" width="9.3" height="1.30" fill="#f4f5f7"/><rect x="567.26" y="560.70" width="9.3" height="1.30" fill="#f4f5f7"/><rect x="580.78" y="560.70" width="9.3" height="1.30" fill="#f4f5f7"/><rect x="594.30" y="559.70" width="9.3" height="2.30" fill="#f4f5f7"/><rect x="607.82" y="560.70" width="9.3" height="1.30" fill="#f4f5f7"/><rect x="621.34" y="559.70" width="9.3" height="2.30" fill="#f4f5f7"/><rect x="634.86" y="560.70" width="9.3" height="1.30" fill="#f4f5f7"/><rect x="648.38" y="560.70" width="9.3" height="1.30" fill="#f4f5f7"/><rect x="661.90" y="559.70" width="9.3" height="2.30" fill="#f4f5f7"/><rect x="675.42" y="559.00" width="9.3" height="3.00" fill="#f4f5f7"/><rect x="688.94" y="560.70" width="9.3" height="1.30" fill="#f4f5f7"/><rect x="702.46" y="556.00" width="9.3" height="6.00" fill="#f4f5f7"/><rect x="715.98" y="560.70" width="9.3" height="1.30" fill="#f4f5f7"/><rect x="729.50" y="559.00" width="9.3" height="3.00" fill="#f4f5f7"/><rect x="743.02" y="560.70" width="9.3" height="1.30" fill="#f4f5f7"/><rect x="756.54" y="560.70" width="9.3" height="1.30" fill="#f4f5f7"/><rect x="770.06" y="559.00" width="9.3" height="3.00" fill="#f4f5f7"/><rect x="783.58" y="560.70" width="9.3" height="1.30" fill="#f4f5f7"/><rect x="323.90" y="605.70" width="9.3" height="2.30" fill="#f4f5f7"/><rect x="337.42" y="605.00" width="9.3" height="3.00" fill="#f4f5f7"/><rect x="350.94" y="605.70" width="9.3" height="2.30" fill="#f4f5f7"/><rect x="364.46" y="605.70" width="9.3" height="2.30" fill="#f4f5f7"/><rect x="377.98" y="606.70" width="9.3" height="1.30" fill="#f4f5f7"/><rect x="391.50" y="606.70" width="9.3" height="1.30" fill="#f4f5f7"/><rect x="405.02" y="605.00" width="9.3" height="3.00" fill="#f4f5f7"/><rect x="418.54" y="606.70" width="9.3" height="1.30" fill="#f4f5f7"/><rect x="432.06" y="605.00" width="9.3" height="3.00" fill="#f4f5f7"/><rect x="445.58" y="605.70" width="9.3" height="2.30" fill="#f4f5f7"/><rect x="459.10" y="606.70" width="9.3" height="1.30" fill="#f4f5f7"/><rect x="472.62" y="606.70" width="9.3" height="1.30" fill="#f4f5f7"/><rect x="486.14" y="606.70" width="9.3" height="1.30" fill="#f4f5f7"/><rect x="499.66" y="605.70" width="9.3" height="2.30" fill="#f4f5f7"/><rect x="513.18" y="605.70" width="9.3" height="2.30" fill="#f4f5f7"/><rect x="526.70" y="580.00" width="9.3" height="28.00" fill="#f4f5f7"/><rect x="540.22" y="606.70" width="9.3" height="1.30" fill="#f4f5f7"/><rect x="567.26" y="603.00" width="9.3" height="5.00" fill="#f4f5f7"/><rect x="580.78" y="606.70" width="9.3" height="1.30" fill="#f4f5f7"/><rect x="594.30" y="606.70" width="9.3" height="1.30" fill="#f4f5f7"/><rect x="607.82" y="603.00" width="9.3" height="5.00" fill="#f4f5f7"/><rect x="621.34" y="604.00" width="9.3" height="4.00" fill="#f4f5f7"/><rect x="634.86" y="605.00" width="9.3" height="3.00" fill="#f4f5f7"/><rect x="648.38" y="605.70" width="9.3" height="2.30" fill="#f4f5f7"/><rect x="661.90" y="605.70" width="9.3" height="2.30" fill="#f4f5f7"/><rect x="675.42" y="605.70" width="9.3" height="2.30" fill="#f4f5f7"/><rect x="688.94" y="602.00" width="9.3" height="6.00" fill="#f4f5f7"/><rect x="702.46" y="604.00" width="9.3" height="4.00" fill="#f4f5f7"/><rect x="715.98" y="605.00" width="9.3" height="3.00" fill="#f4f5f7"/><rect x="729.50" y="604.00" width="9.3" height="4.00" fill="#f4f5f7"/><rect x="743.02" y="606.70" width="9.3" height="1.30" fill="#f4f5f7"/><rect x="756.54" y="602.00" width="9.3" height="6.00" fill="#f4f5f7"/><rect x="770.06" y="605.00" width="9.3" height="3.00" fill="#f4f5f7"/><rect x="323.90" y="650.70" width="9.3" height="2.30" fill="#f4f5f7"/><rect x="337.42" y="651.70" width="9.3" height="1.30" fill="#f4f5f7"/><rect x="350.94" y="650.70" width="9.3" height="2.30" fill="#f4f5f7"/><rect x="364.46" y="651.70" width="9.3" height="1.30" fill="#f4f5f7"/><rect x="377.98" y="651.70" width="9.3" height="1.30" fill="#f4f5f7"/><rect x="391.50" y="651.70" width="9.3" height="1.30" fill="#f4f5f7"/><rect x="405.02" y="651.70" width="9.3" height="1.30" fill="#f4f5f7"/><rect x="418.54" y="651.70" width="9.3" height="1.30" fill="#f4f5f7"/><rect x="432.06" y="651.70" width="9.3" height="1.30" fill="#f4f5f7"/><rect x="445.58" y="650.70" width="9.3" height="2.30" fill="#f4f5f7"/><rect x="459.10" y="650.00" width="9.3" height="3.00" fill="#f4f5f7"/><rect x="472.62" y="651.70" width="9.3" height="1.30" fill="#f4f5f7"/><rect x="486.14" y="651.70" width="9.3" height="1.30" fill="#f4f5f7"/><rect x="499.66" y="650.70" width="9.3" height="2.30" fill="#f4f5f7"/><rect x="513.18" y="646.00" width="9.3" height="7.00" fill="#f4f5f7"/><rect x="526.70" y="630.00" width="9.3" height="23.00" fill="#f4f5f7"/><rect x="540.22" y="647.00" width="9.3" height="6.00" fill="#f4f5f7"/><rect x="567.26" y="650.70" width="9.3" height="2.30" fill="#f4f5f7"/><rect x="580.78" y="650.00" width="9.3" height="3.00" fill="#f4f5f7"/><rect x="594.30" y="650.70" width="9.3" height="2.30" fill="#f4f5f7"/><rect x="607.82" y="650.70" width="9.3" height="2.30" fill="#f4f5f7"/><rect x="621.34" y="650.70" width="9.3" height="2.30" fill="#f4f5f7"/><rect x="634.86" y="650.70" width="9.3" height="2.30" fill="#f4f5f7"/><rect x="648.38" y="649.00" width="9.3" height="4.00" fill="#f4f5f7"/><rect x="661.90" y="648.00" width="9.3" height="5.00" fill="#f4f5f7"/><rect x="675.42" y="651.70" width="9.3" height="1.30" fill="#f4f5f7"/><rect x="688.94" y="651.70" width="9.3" height="1.30" fill="#f4f5f7"/><rect x="702.46" y="650.70" width="9.3" height="2.30" fill="#f4f5f7"/><rect x="715.98" y="650.70" width="9.3" height="2.30" fill="#f4f5f7"/><rect x="729.50" y="650.70" width="9.3" height="2.30" fill="#f4f5f7"/><rect x="743.02" y="651.70" width="9.3" height="1.30" fill="#f4f5f7"/><rect x="756.54" y="650.70" width="9.3" height="2.30" fill="#f4f5f7"/><rect x="770.06" y="651.70" width="9.3" height="1.30" fill="#f4f5f7"/><rect x="783.58" y="651.70" width="9.3" height="1.30" fill="#f4f5f7"/><rect x="323.90" y="695.70" width="9.3" height="2.30" fill="#f4f5f7"/><rect x="337.42" y="696.70" width="9.3" height="1.30" fill="#f4f5f7"/><rect x="350.94" y="695.00" width="9.3" height="3.00" fill="#f4f5f7"/><rect x="364.46" y="696.70" width="9.3" height="1.30" fill="#f4f5f7"/><rect x="377.98" y="696.70" width="9.3" height="1.30" fill="#f4f5f7"/><rect x="391.50" y="695.70" width="9.3" height="2.30" fill="#f4f5f7"/><rect x="405.02" y="693.00" width="9.3" height="5.00" fill="#f4f5f7"/><rect x="418.54" y="695.70" width="9.3" height="2.30" fill="#f4f5f7"/><rect x="432.06" y="695.70" width="9.3" height="2.30" fill="#f4f5f7"/><rect x="445.58" y="695.00" width="9.3" height="3.00" fill="#f4f5f7"/><rect x="445.58" y="695.00" width="9.3" height="1" fill="#e05252"/><rect x="459.10" y="695.00" width="9.3" height="3.00" fill="#f4f5f7"/><rect x="472.62" y="696.70" width="9.3" height="1.30" fill="#f4f5f7"/><rect x="486.14" y="696.70" width="9.3" height="1.30" fill="#f4f5f7"/><rect x="499.66" y="696.70" width="9.3" height="1.30" fill="#f4f5f7"/><rect x="513.18" y="696.70" width="9.3" height="1.30" fill="#f4f5f7"/><rect x="526.70" y="674.00" width="9.3" height="24.00" fill="#f4f5f7"/><rect x="540.22" y="695.70" width="9.3" height="2.30" fill="#f4f5f7"/><rect x="567.26" y="696.70" width="9.3" height="1.30" fill="#f4f5f7"/><rect x="580.78" y="696.70" width="9.3" height="1.30" fill="#f4f5f7"/><rect x="594.30" y="696.70" width="9.3" height="1.30" fill="#f4f5f7"/><rect x="607.82" y="695.00" width="9.3" height="3.00" fill="#f4f5f7"/><rect x="621.34" y="696.70" width="9.3" height="1.30" fill="#f4f5f7"/><rect x="634.86" y="695.70" width="9.3" height="2.30" fill="#f4f5f7"/><rect x="648.38" y="695.70" width="9.3" height="2.30" fill="#f4f5f7"/><rect x="661.90" y="696.70" width="9.3" height="1.30" fill="#f4f5f7"/><rect x="675.42" y="696.70" width="9.3" height="1.30" fill="#f4f5f7"/><rect x="688.94" y="696.70" width="9.3" height="1.30" fill="#f4f5f7"/><rect x="702.46" y="696.70" width="9.3" height="1.30" fill="#f4f5f7"/><rect x="715.98" y="691.00" width="9.3" height="7.00" fill="#f4f5f7"/><rect x="729.50" y="695.70" width="9.3" height="2.30" fill="#f4f5f7"/><rect x="743.02" y="696.70" width="9.3" height="1.30" fill="#f4f5f7"/><rect x="756.54" y="696.70" width="9.3" height="1.30" fill="#f4f5f7"/><rect x="770.06" y="696.70" width="9.3" height="1.30" fill="#f4f5f7"/><rect x="783.58" y="695.70" width="9.3" height="2.30" fill="#f4f5f7"/><rect x="323.90" y="742.70" width="9.3" height="1.30" fill="#f4f5f7"/><rect x="337.42" y="739.00" width="9.3" height="5.00" fill="#f4f5f7"/><rect x="350.94" y="738.00" width="9.3" height="6.00" fill="#f4f5f7"/><rect x="364.46" y="739.00" width="9.3" height="5.00" fill="#f4f5f7"/><rect x="377.98" y="741.70" width="9.3" height="2.30" fill="#f4f5f7"/><rect x="391.50" y="739.00" width="9.3" height="5.00" fill="#f4f5f7"/><rect x="405.02" y="741.70" width="9.3" height="2.30" fill="#f4f5f7"/><rect x="418.54" y="741.70" width="9.3" height="2.30" fill="#f4f5f7"/><rect x="432.06" y="741.00" width="9.3" height="3.00" fill="#f4f5f7"/><rect x="445.58" y="742.70" width="9.3" height="1.30" fill="#f4f5f7"/><rect x="459.10" y="741.70" width="9.3" height="2.30" fill="#f4f5f7"/><rect x="472.62" y="738.00" width="9.3" height="6.00" fill="#f4f5f7"/><rect x="486.14" y="741.70" width="9.3" height="2.30" fill="#f4f5f7"/><rect x="499.66" y="741.70" width="9.3" height="2.30" fill="#f4f5f7"/><rect x="513.18" y="742.70" width="9.3" height="1.30" fill="#f4f5f7"/><rect x="526.70" y="727.00" width="9.3" height="17.00" fill="#f4f5f7"/><rect x="540.22" y="741.70" width="9.3" height="2.30" fill="#f4f5f7"/><rect x="567.26" y="742.70" width="9.3" height="1.30" fill="#f4f5f7"/><rect x="580.78" y="741.70" width="9.3" height="2.30" fill="#f4f5f7"/><rect x="594.30" y="741.00" width="9.3" height="3.00" fill="#f4f5f7"/><rect x="607.82" y="741.70" width="9.3" height="2.30" fill="#f4f5f7"/><rect x="621.34" y="741.00" width="9.3" height="3.00" fill="#f4f5f7"/><rect x="634.86" y="741.70" width="9.3" height="2.30" fill="#f4f5f7"/><rect x="648.38" y="742.70" width="9.3" height="1.30" fill="#f4f5f7"/><rect x="661.90" y="741.70" width="9.3" height="2.30" fill="#f4f5f7"/><rect x="675.42" y="742.70" width="9.3" height="1.30" fill="#f4f5f7"/><rect x="688.94" y="742.70" width="9.3" height="1.30" fill="#f4f5f7"/><rect x="702.46" y="741.70" width="9.3" height="2.30" fill="#f4f5f7"/><rect x="715.98" y="742.70" width="9.3" height="1.30" fill="#f4f5f7"/><rect x="729.50" y="741.00" width="9.3" height="3.00" fill="#f4f5f7"/><rect x="743.02" y="741.70" width="9.3" height="2.30" fill="#f4f5f7"/><rect x="756.54" y="741.70" width="9.3" height="2.30" fill="#f4f5f7"/><rect x="770.06" y="741.70" width="9.3" height="2.30" fill="#f4f5f7"/><rect x="323.90" y="786.70" width="9.3" height="2.30" fill="#f4f5f7"/><rect x="337.42" y="787.70" width="9.3" height="1.30" fill="#f4f5f7"/><rect x="350.94" y="787.70" width="9.3" height="1.30" fill="#f4f5f7"/><rect x="364.46" y="784.00" width="9.3" height="5.00" fill="#f4f5f7"/><rect x="377.98" y="786.70" width="9.3" height="2.30" fill="#f4f5f7"/><rect x="391.50" y="787.70" width="9.3" height="1.30" fill="#f4f5f7"/><rect x="405.02" y="787.70" width="9.3" height="1.30" fill="#f4f5f7"/><rect x="418.54" y="787.70" width="9.3" height="1.30" fill="#f4f5f7"/><rect x="432.06" y="786.70" width="9.3" height="2.30" fill="#f4f5f7"/><rect x="445.58" y="787.70" width="9.3" height="1.30" fill="#f4f5f7"/><rect x="459.10" y="787.70" width="9.3" height="1.30" fill="#f4f5f7"/><rect x="472.62" y="787.70" width="9.3" height="1.30" fill="#f4f5f7"/><rect x="486.14" y="786.00" width="9.3" height="3.00" fill="#f4f5f7"/><rect x="499.66" y="787.70" width="9.3" height="1.30" fill="#f4f5f7"/><rect x="513.18" y="784.00" width="9.3" height="5.00" fill="#f4f5f7"/><rect x="526.70" y="751.00" width="9.3" height="38.00" fill="#f4f5f7"/><rect x="540.22" y="787.70" width="9.3" height="1.30" fill="#f4f5f7"/><rect x="567.26" y="787.70" width="9.3" height="1.30" fill="#f4f5f7"/><rect x="580.78" y="786.00" width="9.3" height="3.00" fill="#f4f5f7"/><rect x="594.30" y="787.70" width="9.3" height="1.30" fill="#f4f5f7"/><rect x="607.82" y="787.70" width="9.3" height="1.30" fill="#f4f5f7"/><rect x="621.34" y="787.70" width="9.3" height="1.30" fill="#f4f5f7"/><rect x="634.86" y="784.00" width="9.3" height="5.00" fill="#f4f5f7"/><rect x="648.38" y="787.70" width="9.3" height="1.30" fill="#f4f5f7"/><rect x="661.90" y="787.70" width="9.3" height="1.30" fill="#f4f5f7"/><rect x="675.42" y="787.70" width="9.3" height="1.30" fill="#f4f5f7"/><rect x="688.94" y="786.70" width="9.3" height="2.30" fill="#f4f5f7"/><rect x="702.46" y="787.70" width="9.3" height="1.30" fill="#f4f5f7"/><rect x="715.98" y="786.70" width="9.3" height="2.30" fill="#f4f5f7"/><rect x="729.50" y="786.00" width="9.3" height="3.00" fill="#f4f5f7"/><rect x="743.02" y="787.70" width="9.3" height="1.30" fill="#f4f5f7"/><rect x="756.54" y="787.70" width="9.3" height="1.30" fill="#f4f5f7"/><rect x="770.06" y="787.70" width="9.3" height="1.30" fill="#f4f5f7"/><rect x="783.58" y="783.00" width="9.3" height="6.00" fill="#f4f5f7"/><rect x="323.90" y="831.00" width="9.3" height="4.00" fill="#f4f5f7"/><rect x="337.42" y="832.00" width="9.3" height="3.00" fill="#f4f5f7"/><rect x="350.94" y="833.70" width="9.3" height="1.30" fill="#f4f5f7"/><rect x="364.46" y="832.70" width="9.3" height="2.30" fill="#f4f5f7"/><rect x="377.98" y="832.00" width="9.3" height="3.00" fill="#f4f5f7"/><rect x="391.50" y="832.70" width="9.3" height="2.30" fill="#f4f5f7"/><rect x="405.02" y="833.70" width="9.3" height="1.30" fill="#f4f5f7"/><rect x="418.54" y="832.70" width="9.3" height="2.30" fill="#f4f5f7"/><rect x="432.06" y="833.70" width="9.3" height="1.30" fill="#f4f5f7"/><rect x="445.58" y="833.70" width="9.3" height="1.30" fill="#f4f5f7"/><rect x="459.10" y="832.70" width="9.3" height="2.30" fill="#f4f5f7"/><rect x="472.62" y="832.00" width="9.3" height="3.00" fill="#f4f5f7"/><rect x="486.14" y="831.00" width="9.3" height="4.00" fill="#f4f5f7"/><rect x="499.66" y="832.00" width="9.3" height="3.00" fill="#f4f5f7"/><rect x="513.18" y="832.70" width="9.3" height="2.30" fill="#f4f5f7"/><rect x="526.70" y="818.00" width="9.3" height="17.00" fill="#f4f5f7"/><rect x="540.22" y="832.70" width="9.3" height="2.30" fill="#f4f5f7"/><rect x="553.74" y="832.70" width="9.3" height="2.30" fill="#f4f5f7"/><rect x="580.78" y="833.70" width="9.3" height="1.30" fill="#f4f5f7"/><rect x="594.30" y="832.00" width="9.3" height="3.00" fill="#f4f5f7"/><rect x="607.82" y="833.70" width="9.3" height="1.30" fill="#f4f5f7"/><rect x="621.34" y="832.70" width="9.3" height="2.30" fill="#f4f5f7"/><rect x="634.86" y="832.70" width="9.3" height="2.30" fill="#f4f5f7"/><rect x="648.38" y="832.00" width="9.3" height="3.00" fill="#f4f5f7"/><rect x="661.90" y="831.00" width="9.3" height="4.00" fill="#f4f5f7"/><rect x="675.42" y="832.70" width="9.3" height="2.30" fill="#f4f5f7"/><rect x="688.94" y="830.00" width="9.3" height="5.00" fill="#f4f5f7"/><rect x="702.46" y="832.70" width="9.3" height="2.30" fill="#f4f5f7"/><rect x="715.98" y="832.00" width="9.3" height="3.00" fill="#f4f5f7"/><rect x="729.50" y="829.00" width="9.3" height="6.00" fill="#f4f5f7"/><rect x="743.02" y="832.70" width="9.3" height="2.30" fill="#f4f5f7"/><rect x="756.54" y="832.70" width="9.3" height="2.30" fill="#f4f5f7"/><rect x="770.06" y="833.70" width="9.3" height="1.30" fill="#f4f5f7"/><rect x="783.58" y="832.70" width="9.3" height="2.30" fill="#f4f5f7"/><rect x="323.90" y="875.00" width="9.3" height="5.00" fill="#f4f5f7"/><rect x="337.42" y="878.70" width="9.3" height="1.30" fill="#f4f5f7"/><rect x="350.94" y="877.00" width="9.3" height="3.00" fill="#f4f5f7"/><rect x="364.46" y="877.70" width="9.3" height="2.30" fill="#f4f5f7"/><rect x="377.98" y="878.70" width="9.3" height="1.30" fill="#f4f5f7"/><rect x="391.50" y="877.70" width="9.3" height="2.30" fill="#f4f5f7"/><rect x="405.02" y="878.70" width="9.3" height="1.30" fill="#f4f5f7"/><rect x="418.54" y="875.00" width="9.3" height="5.00" fill="#f4f5f7"/><rect x="432.06" y="877.70" width="9.3" height="2.30" fill="#f4f5f7"/><rect x="445.58" y="877.70" width="9.3" height="2.30" fill="#f4f5f7"/><rect x="459.10" y="874.00" width="9.3" height="6.00" fill="#f4f5f7"/><rect x="472.62" y="877.70" width="9.3" height="2.30" fill="#f4f5f7"/><rect x="486.14" y="876.00" width="9.3" height="4.00" fill="#f4f5f7"/><rect x="499.66" y="878.70" width="9.3" height="1.30" fill="#f4f5f7"/><rect x="513.18" y="877.70" width="9.3" height="2.30" fill="#f4f5f7"/><rect x="526.70" y="857.00" width="9.3" height="23.00" fill="#f4f5f7"/><rect x="540.22" y="878.70" width="9.3" height="1.30" fill="#f4f5f7"/><rect x="553.74" y="878.70" width="9.3" height="1.30" fill="#f4f5f7"/><rect x="580.78" y="877.70" width="9.3" height="2.30" fill="#f4f5f7"/><rect x="594.30" y="877.70" width="9.3" height="2.30" fill="#f4f5f7"/><rect x="607.82" y="877.70" width="9.3" height="2.30" fill="#f4f5f7"/><rect x="621.34" y="877.00" width="9.3" height="3.00" fill="#f4f5f7"/><rect x="634.86" y="878.70" width="9.3" height="1.30" fill="#f4f5f7"/><rect x="648.38" y="874.00" width="9.3" height="6.00" fill="#f4f5f7"/><rect x="661.90" y="874.00" width="9.3" height="6.00" fill="#f4f5f7"/><rect x="675.42" y="877.70" width="9.3" height="2.30" fill="#f4f5f7"/><rect x="688.94" y="877.70" width="9.3" height="2.30" fill="#f4f5f7"/><rect x="702.46" y="875.00" width="9.3" height="5.00" fill="#f4f5f7"/><rect x="715.98" y="872.00" width="9.3" height="8.00" fill="#f4f5f7"/><rect x="729.50" y="877.70" width="9.3" height="2.30" fill="#f4f5f7"/><rect x="743.02" y="877.70" width="9.3" height="2.30" fill="#f4f5f7"/><rect x="756.54" y="877.70" width="9.3" height="2.30" fill="#f4f5f7"/><rect x="770.06" y="878.70" width="9.3" height="1.30" fill="#f4f5f7"/><rect x="783.58" y="877.70" width="9.3" height="2.30" fill="#f4f5f7"/><rect x="323.90" y="922.00" width="9.3" height="3.00" fill="#f4f5f7"/><rect x="337.42" y="923.70" width="9.3" height="1.30" fill="#f4f5f7"/><rect x="350.94" y="922.70" width="9.3" height="2.30" fill="#f4f5f7"/><rect x="364.46" y="923.70" width="9.3" height="1.30" fill="#f4f5f7"/><rect x="377.98" y="923.70" width="9.3" height="1.30" fill="#f4f5f7"/><rect x="391.50" y="921.00" width="9.3" height="4.00" fill="#f4f5f7"/><rect x="405.02" y="923.70" width="9.3" height="1.30" fill="#f4f5f7"/><rect x="418.54" y="922.70" width="9.3" height="2.30" fill="#f4f5f7"/><rect x="432.06" y="923.70" width="9.3" height="1.30" fill="#f4f5f7"/><rect x="445.58" y="923.70" width="9.3" height="1.30" fill="#f4f5f7"/><rect x="459.10" y="918.00" width="9.3" height="7.00" fill="#f4f5f7"/><rect x="472.62" y="923.70" width="9.3" height="1.30" fill="#f4f5f7"/><rect x="486.14" y="923.70" width="9.3" height="1.30" fill="#f4f5f7"/><rect x="499.66" y="922.70" width="9.3" height="2.30" fill="#f4f5f7"/><rect x="513.18" y="922.70" width="9.3" height="2.30" fill="#f4f5f7"/><rect x="526.70" y="895.00" width="9.3" height="30.00" fill="#f4f5f7"/><rect x="540.22" y="923.70" width="9.3" height="1.30" fill="#f4f5f7"/><rect x="553.74" y="922.70" width="9.3" height="2.30" fill="#f4f5f7"/><rect x="580.78" y="923.70" width="9.3" height="1.30" fill="#f4f5f7"/><rect x="594.30" y="923.70" width="9.3" height="1.30" fill="#f4f5f7"/><rect x="607.82" y="921.00" width="9.3" height="4.00" fill="#f4f5f7"/><rect x="621.34" y="922.70" width="9.3" height="2.30" fill="#f4f5f7"/><rect x="634.86" y="923.70" width="9.3" height="1.30" fill="#f4f5f7"/><rect x="648.38" y="922.70" width="9.3" height="2.30" fill="#f4f5f7"/><rect x="661.90" y="922.70" width="9.3" height="2.30" fill="#f4f5f7"/><rect x="675.42" y="923.70" width="9.3" height="1.30" fill="#f4f5f7"/><rect x="688.94" y="922.70" width="9.3" height="2.30" fill="#f4f5f7"/><rect x="702.46" y="922.00" width="9.3" height="3.00" fill="#f4f5f7"/><rect x="715.98" y="923.70" width="9.3" height="1.30" fill="#f4f5f7"/><rect x="729.50" y="923.70" width="9.3" height="1.30" fill="#f4f5f7"/><rect x="743.02" y="923.70" width="9.3" height="1.30" fill="#f4f5f7"/><rect x="756.54" y="923.70" width="9.3" height="1.30" fill="#f4f5f7"/><rect x="770.06" y="923.70" width="9.3" height="1.30" fill="#f4f5f7"/><rect x="783.58" y="923.70" width="9.3" height="1.30" fill="#f4f5f7"/><rect x="323.90" y="968.70" width="9.3" height="2.30" fill="#f4f5f7"/><rect x="337.42" y="968.70" width="9.3" height="2.30" fill="#f4f5f7"/><rect x="350.94" y="968.00" width="9.3" height="3.00" fill="#f4f5f7"/><rect x="364.46" y="967.00" width="9.3" height="4.00" fill="#f4f5f7"/><rect x="377.98" y="968.70" width="9.3" height="2.30" fill="#f4f5f7"/><rect x="391.50" y="968.70" width="9.3" height="2.30" fill="#f4f5f7"/><rect x="405.02" y="969.70" width="9.3" height="1.30" fill="#f4f5f7"/><rect x="418.54" y="968.70" width="9.3" height="2.30" fill="#f4f5f7"/><rect x="432.06" y="968.70" width="9.3" height="2.30" fill="#f4f5f7"/><rect x="445.58" y="968.70" width="9.3" height="2.30" fill="#f4f5f7"/><rect x="459.10" y="968.70" width="9.3" height="2.30" fill="#f4f5f7"/><rect x="472.62" y="967.00" width="9.3" height="4.00" fill="#f4f5f7"/><rect x="486.14" y="968.70" width="9.3" height="2.30" fill="#f4f5f7"/><rect x="499.66" y="968.70" width="9.3" height="2.30" fill="#f4f5f7"/><rect x="513.18" y="969.70" width="9.3" height="1.30" fill="#f4f5f7"/><rect x="526.70" y="955.00" width="9.3" height="16.00" fill="#f4f5f7"/><rect x="540.22" y="969.70" width="9.3" height="1.30" fill="#f4f5f7"/><rect x="567.26" y="969.70" width="9.3" height="1.30" fill="#f4f5f7"/><rect x="580.78" y="969.70" width="9.3" height="1.30" fill="#f4f5f7"/><rect x="594.30" y="968.70" width="9.3" height="2.30" fill="#f4f5f7"/><rect x="607.82" y="968.70" width="9.3" height="2.30" fill="#f4f5f7"/><rect x="621.34" y="968.00" width="9.3" height="3.00" fill="#f4f5f7"/><rect x="634.86" y="968.00" width="9.3" height="3.00" fill="#f4f5f7"/><rect x="648.38" y="967.00" width="9.3" height="4.00" fill="#f4f5f7"/><rect x="661.90" y="969.70" width="9.3" height="1.30" fill="#f4f5f7"/><rect x="675.42" y="969.70" width="9.3" height="1.30" fill="#f4f5f7"/><rect x="688.94" y="968.70" width="9.3" height="2.30" fill="#f4f5f7"/><rect x="702.46" y="968.70" width="9.3" height="2.30" fill="#f4f5f7"/><rect x="715.98" y="968.70" width="9.3" height="2.30" fill="#f4f5f7"/><rect x="729.50" y="968.00" width="9.3" height="3.00" fill="#f4f5f7"/><rect x="743.02" y="969.70" width="9.3" height="1.30" fill="#f4f5f7"/><rect x="756.54" y="969.70" width="9.3" height="1.30" fill="#f4f5f7"/><rect x="770.06" y="968.70" width="9.3" height="2.30" fill="#f4f5f7"/><rect x="783.58" y="968.00" width="9.3" height="3.00" fill="#f4f5f7"/><rect x="337.42" y="1014.70" width="9.3" height="1.30" fill="#f4f5f7"/><rect x="350.94" y="1013.70" width="9.3" height="2.30" fill="#f4f5f7"/><rect x="364.46" y="1014.70" width="9.3" height="1.30" fill="#f4f5f7"/><rect x="377.98" y="1014.70" width="9.3" height="1.30" fill="#f4f5f7"/><rect x="391.50" y="1013.70" width="9.3" height="2.30" fill="#f4f5f7"/><rect x="405.02" y="1014.70" width="9.3" height="1.30" fill="#f4f5f7"/><rect x="418.54" y="1014.70" width="9.3" height="1.30" fill="#f4f5f7"/><rect x="432.06" y="1014.70" width="9.3" height="1.30" fill="#f4f5f7"/><rect x="445.58" y="1014.70" width="9.3" height="1.30" fill="#f4f5f7"/><rect x="459.10" y="1014.70" width="9.3" height="1.30" fill="#f4f5f7"/><rect x="472.62" y="1012.00" width="9.3" height="4.00" fill="#f4f5f7"/><rect x="486.14" y="1014.70" width="9.3" height="1.30" fill="#f4f5f7"/><rect x="499.66" y="1011.00" width="9.3" height="5.00" fill="#f4f5f7"/><rect x="513.18" y="1013.70" width="9.3" height="2.30" fill="#f4f5f7"/><rect x="526.70" y="999.00" width="9.3" height="17.00" fill="#f4f5f7"/><rect x="540.22" y="1014.70" width="9.3" height="1.30" fill="#f4f5f7"/><rect x="567.26" y="1014.70" width="9.3" height="1.30" fill="#f4f5f7"/><rect x="580.78" y="1014.70" width="9.3" height="1.30" fill="#f4f5f7"/><rect x="594.30" y="1013.70" width="9.3" height="2.30" fill="#f4f5f7"/><rect x="607.82" y="1014.70" width="9.3" height="1.30" fill="#f4f5f7"/><rect x="621.34" y="1014.70" width="9.3" height="1.30" fill="#f4f5f7"/><rect x="634.86" y="1011.00" width="9.3" height="5.00" fill="#f4f5f7"/><rect x="648.38" y="1014.70" width="9.3" height="1.30" fill="#f4f5f7"/><rect x="661.90" y="1013.70" width="9.3" height="2.30" fill="#f4f5f7"/><rect x="675.42" y="1014.70" width="9.3" height="1.30" fill="#f4f5f7"/><rect x="688.94" y="1013.70" width="9.3" height="2.30" fill="#f4f5f7"/><rect x="702.46" y="1014.70" width="9.3" height="1.30" fill="#f4f5f7"/><rect x="715.98" y="1013.00" width="9.3" height="3.00" fill="#f4f5f7"/><rect x="729.50" y="1013.00" width="9.3" height="3.00" fill="#f4f5f7"/><rect x="743.02" y="1013.70" width="9.3" height="2.30" fill="#f4f5f7"/><rect x="756.54" y="1014.70" width="9.3" height="1.30" fill="#f4f5f7"/><rect x="770.06" y="1014.70" width="9.3" height="1.30" fill="#f4f5f7"/><rect x="783.58" y="1014.70" width="9.3" height="1.30" fill="#f4f5f7"/></svg>
<div class="r" style="left:808.0px;top:240.7px;width:1.2px;height:781px;background:#3d4b60;"></div>
<div class="t" style="left:1077.70px;top:243.04px;font-size:15.6px;color:#a3a9b4;letter-spacing:-0.200px;">1 min delay: logs are compacted before being available</div>
<div class="r" style="left:809.2px;top:265px;width:909px;height:77px;background:#3b4252;"></div>
<div class="r" style="left:809.2px;top:342px;width:909px;height:23.8px;background:#2e3440;"></div>
<div class="r" style="left:809.2px;top:365.8px;width:909px;height:609.8px;background:#3b4252;"></div>
<svg class="r" style="left:1702.8px;top:365.6px;" width="14.8" height="14.8" viewBox="0 0 24 24" fill="none" stroke="#f2f2f2" stroke-width="2.6" stroke-linecap="round" stroke-linejoin="round"><path d="m21 21-6-6m6 6v-4.8m0 4.8h-4.8"/><path d="M3 16.2V21m0 0h4.8M3 21l6-6"/><path d="M21 7.8V3m0 0h-4.8M21 3l-6 6"/><path d="M3 7.8V3m0 0h4.8M3 3l6 6"/></svg>
<div class="t" style="left:814.30px;top:345.96px;font-size:16.4px;color:#f2f2f2;-webkit-text-stroke:0.46px #f2f2f2;letter-spacing:1.144px;">09/01, 08:49 AM</div>
<div class="r" style="left:809.2px;top:265px;width:909px;height:77px;overflow:hidden"><div style="position:absolute;left:9.9px;top:-9.31px;font-family:'Liberation Mono',monospace;font-size:14.37px;line-height:19.17px;color:#f0f0f0;white-space:pre">default-5sms9-Jmn1G&quot;,&quot;name&quot;:&quot;worker&quot;}
2024-09-01T06:48:58.522978Z <span style="color:#00bb00">INFO</span> ping update, memory: container=126MB, windmill=31MB
target=windmill_worker::worker span={&quot;hostname&quot;:&quot;windmill-workers-65b4dc8cd5-5sms9&quot;,&quot;worker&quot;:&quot;wk-
default-5sms9-Jmn1G&quot;,&quot;name&quot;:&quot;worker&quot;}</div></div>
<div class="r" style="left:819.1px;top:391.09px;font-family:'Liberation Mono',monospace;font-size:14.37px;line-height:19.17px;color:#f0f0f0;white-space:pre">2024-09-01T06:49:04.529675Z <span style="color:#00bb00">INFO</span> ping update, memory: container=126MB, windmill=31MB
target=windmill_worker::worker span={&quot;hostname&quot;:&quot;windmill-workers-65b4dc8cd5-5sms9&quot;,&quot;worker&quot;:&quot;wk-
default-5sms9-Jmn1G&quot;,&quot;name&quot;:&quot;worker&quot;}
2024-09-01T06:49:10.537862Z <span style="color:#00bb00">INFO</span> ping update, memory: container=126MB, windmill=32MB
target=windmill_worker::worker span={&quot;hostname&quot;:&quot;windmill-workers-65b4dc8cd5-5sms9&quot;,&quot;worker&quot;:&quot;wk-
default-5sms9-Jmn1G&quot;,&quot;name&quot;:&quot;worker&quot;}
2024-09-01T06:49:16.551361Z <span style="color:#00bb00">INFO</span> ping update, memory: container=126MB, windmill=32MB
target=windmill_worker::worker span={&quot;hostname&quot;:&quot;windmill-workers-65b4dc8cd5-5sms9&quot;,&quot;worker&quot;:&quot;wk-
default-5sms9-Jmn1G&quot;,&quot;name&quot;:&quot;worker&quot;}
2024-09-01T06:49:22.569591Z <span style="color:#00bb00">INFO</span> ping update, memory: container=126MB, windmill=32MB
target=windmill_worker::worker span={&quot;hostname&quot;:&quot;windmill-workers-65b4dc8cd5-5sms9&quot;,&quot;worker&quot;:&quot;wk-
default-5sms9-Jmn1G&quot;,&quot;name&quot;:&quot;worker&quot;}
2024-09-01T06:49:28.622554Z <span style="color:#00bb00">INFO</span> ping update, memory: container=126MB, windmill=32MB
target=windmill_worker::worker span={&quot;hostname&quot;:&quot;windmill-workers-65b4dc8cd5-5sms9&quot;,&quot;worker&quot;:&quot;wk-
default-5sms9-Jmn1G&quot;,&quot;name&quot;:&quot;worker&quot;}
2024-09-01T06:49:34.633224Z <span style="color:#00bb00">INFO</span> ping update, memory: container=126MB, windmill=31MB
target=windmill_worker::worker span={&quot;hostname&quot;:&quot;windmill-workers-65b4dc8cd5-5sms9&quot;,&quot;worker&quot;:&quot;wk-
default-5sms9-Jmn1G&quot;,&quot;name&quot;:&quot;worker&quot;}
2024-09-01T06:49:40.688259Z <span style="color:#00bb00">INFO</span> ping update, memory: container=126MB, windmill=31MB
target=windmill_worker::worker span={&quot;hostname&quot;:&quot;windmill-workers-65b4dc8cd5-5sms9&quot;,&quot;worker&quot;:&quot;wk-
default-5sms9-Jmn1G&quot;,&quot;name&quot;:&quot;worker&quot;}
2024-09-01T06:49:46.704319Z <span style="color:#00bb00">INFO</span> ping update, memory: container=126MB, windmill=31MB
target=windmill_worker::worker span={&quot;hostname&quot;:&quot;windmill-workers-65b4dc8cd5-5sms9&quot;,&quot;worker&quot;:&quot;wk-
default-5sms9-Jmn1G&quot;,&quot;name&quot;:&quot;worker&quot;}
2024-09-01T06:49:52.756855Z <span style="color:#00bb00">INFO</span> ping update, memory: container=126MB, windmill=31MB
target=windmill_worker::worker span={&quot;hostname&quot;:&quot;windmill-workers-65b4dc8cd5-5sms9&quot;,&quot;worker&quot;:&quot;wk-
default-5sms9-Jmn1G&quot;,&quot;name&quot;:&quot;worker&quot;}
2024-09-01T06:49:58.813859Z <span style="color:#00bb00">INFO</span> ping update, memory: container=126MB, windmill=31MB
target=windmill_worker::worker span={&quot;hostname&quot;:&quot;windmill-workers-65b4dc8cd5-5sms9&quot;,&quot;worker&quot;:&quot;wk-
default-5sms9-Jmn1G&quot;,&quot;name&quot;:&quot;worker&quot;}</div>
<div class="t" style="left:814.40px;top:992.88px;font-size:15.2px;color:#a3a9b4;letter-spacing:-0.369px;">Last 5 log files up to:</div>
<div class="t" style="left:1143.80px;top:993.64px;font-size:15.6px;color:#f2f2f2;-webkit-text-stroke:0.44px #f2f2f2;letter-spacing:-1.409px;">&lt;</div>
<div class="t" style="left:1157.00px;top:993.64px;font-size:15.6px;color:#f2f2f2;-webkit-text-stroke:0.44px #f2f2f2;letter-spacing:-1.272px;">5m</div>
<div class="r" style="left:1188.4px;top:981.3px;width:256.5px;height:40.6px;background:#374151;border:1px solid #4b5563;box-sizing:border-box;border-radius:7px;"></div>
<div class="t" style="left:1199.50px;top:993.79px;font-size:16.6px;color:#e6e6e6;letter-spacing:0.724px;">09/01, 08:49 AM</div>
<div class="r" style="left:1403.7px;top:986.8px;width:36.8px;height:29.7px;background:#2e3440;border:1px solid #4b5563;box-sizing:border-box;border-radius:5px;"></div>
<svg class="r" style="left:1413.2px;top:992.6px;" width="16.8" height="16.8" viewBox="0 0 24 24" fill="none" stroke="#f2f2f2" stroke-width="2" stroke-linecap="round" stroke-linejoin="round"><rect width="18" height="18" x="3" y="4" rx="2" ry="2"/><line x1="16" x2="16" y1="2" y2="6"/><line x1="8" x2="8" y1="2" y2="6"/><line x1="3" x2="21" y1="10" y2="10"/></svg>
<div class="t" style="left:1460.00px;top:993.64px;font-size:15.6px;color:#f2f2f2;-webkit-text-stroke:0.44px #f2f2f2;letter-spacing:-1.272px;">5m</div>
<div class="t" style="left:1486.20px;top:993.64px;font-size:15.6px;color:#f2f2f2;-webkit-text-stroke:0.44px #f2f2f2;letter-spacing:-1.409px;">&gt;</div>
<div class="t" style="left:1688.40px;top:994.40px;font-size:16.0px;color:#f2f2f2;-webkit-text-stroke:0.45px #f2f2f2;letter-spacing:-0.530px;">now</div>
</div></body></html>
